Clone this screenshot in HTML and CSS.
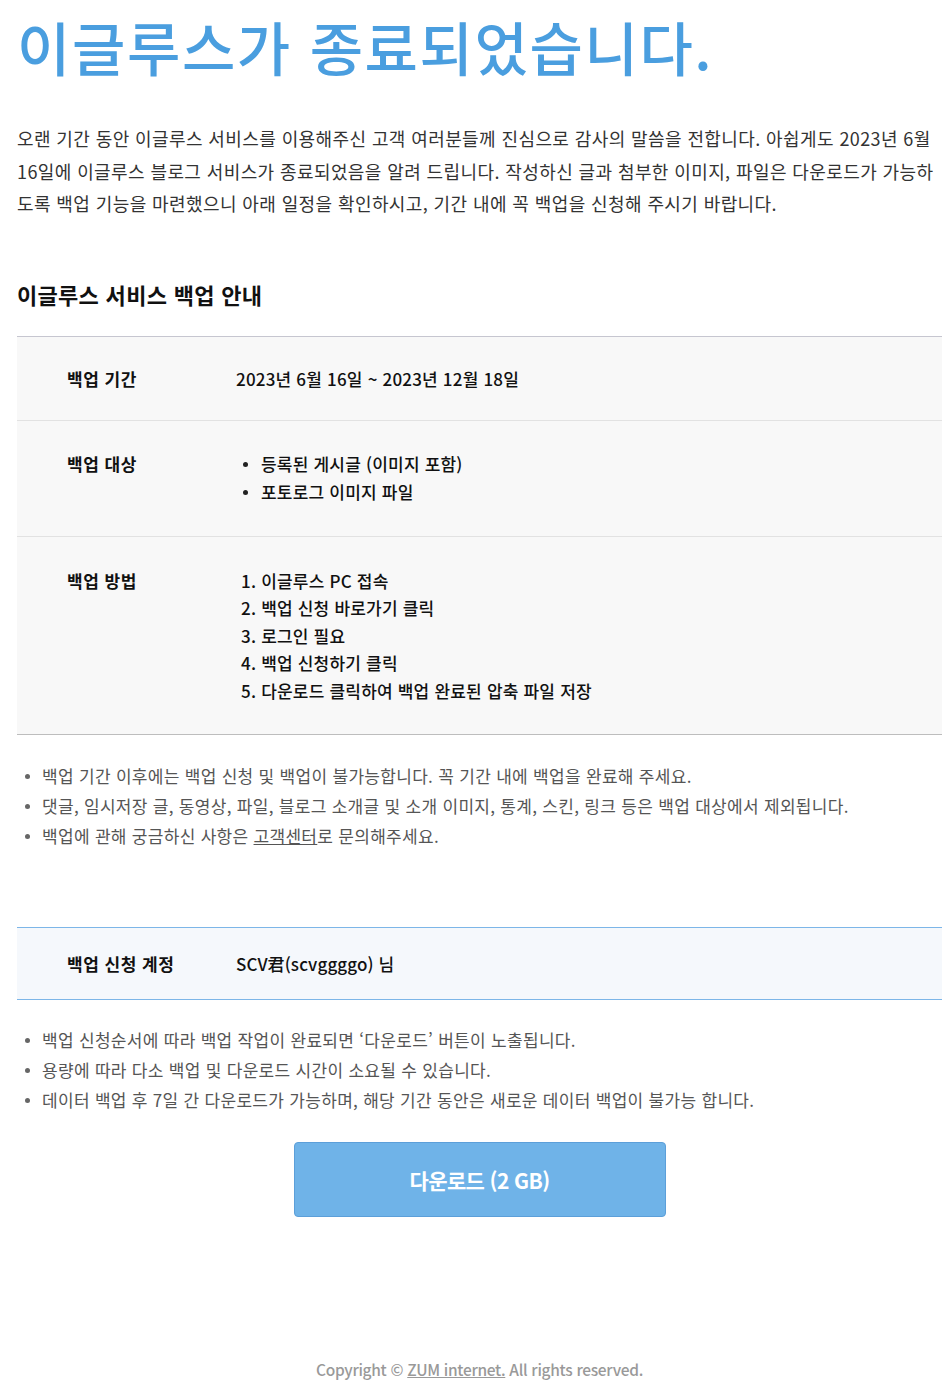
FILE: index.html
```html
<!DOCTYPE html>
<html lang="ko">
<head>
<meta charset="utf-8">
<title>이글루스가 종료되었습니다.</title>
<link rel="stylesheet" href="styles.css">
</head>
<body>
<div class="page">
  <h1 class="title">이글루스가 종료되었습니다.</h1>
  <p class="intro">오랜 기간 동안 이글루스 서비스를 이용해주신 고객 여러분들께 진심으로 감사의 말씀을 전합니다. 아쉽게도 2023년 6월 16일에 이글루스 블로그 서비스가 종료되었음을 알려 드립니다. 작성하신 글과 첨부한 이미지, 파일은 다운로드가 가능하도록 백업 기능을 마련했으니 아래 일정을 확인하시고, 기간 내에 꼭 백업을 신청해 주시기 바랍니다.</p>

  <h2 class="section-title">이글루스 서비스 백업 안내</h2>

  <div class="info-table">
    <div class="row">
      <div class="label">백업 기간</div>
      <div class="value">2023년 6월 16일 ~ 2023년 12월 18일</div>
    </div>
    <div class="row">
      <div class="label">백업 대상</div>
      <ul class="value dots">
        <li>등록된 게시글 (이미지 포함)</li>
        <li>포토로그 이미지 파일</li>
      </ul>
    </div>
    <div class="row">
      <div class="label">백업 방법</div>
      <ol class="value steps">
        <li>1. 이글루스 PC 접속</li>
        <li>2. 백업 신청 바로가기 클릭</li>
        <li>3. 로그인 필요</li>
        <li>4. 백업 신청하기 클릭</li>
        <li>5. 다운로드 클릭하여 백업 완료된 압축 파일 저장</li>
      </ol>
    </div>
  </div>

  <ul class="notes">
    <li>백업 기간 이후에는 백업 신청 및 백업이 불가능합니다. 꼭 기간 내에 백업을 완료해 주세요.</li>
    <li>댓글, 임시저장 글, 동영상, 파일, 블로그 소개글 및 소개 이미지, 통계, 스킨, 링크 등은 백업 대상에서 제외됩니다.</li>
    <li>백업에 관해 궁금하신 사항은 <a href="#" class="link">고객센터</a>로 문의해주세요.</li>
  </ul>

  <div class="account">
    <div class="label">백업 신청 계정</div>
    <div class="value">SCV君(scvggggo) 님</div>
  </div>

  <ul class="notes notes-after">
    <li>백업 신청순서에 따라 백업 작업이 완료되면 ‘다운로드’ 버튼이 노출됩니다.</li>
    <li>용량에 따라 다소 백업 및 다운로드 시간이 소요될 수 있습니다.</li>
    <li>데이터 백업 후 7일 간 다운로드가 가능하며, 해당 기간 동안은 새로운 데이터 백업이 불가능 합니다.</li>
  </ul>

  <div class="btn-wrap">
    <button class="btn" type="button">다운로드 (2 GB)</button>
  </div>

  <footer class="footer">Copyright © <a href="#" class="footer-link">ZUM internet.</a> All rights reserved.</footer>
</div>
</body>
</html>
```

FILE: styles.css
```css
* { box-sizing: border-box; }
html, body { margin: 0; padding: 0; background: #fff; }
body {
  font-family: "Noto Sans CJK KR", "Noto Sans", sans-serif;
  color: #333;
}
.page {
  width: 925px;
  margin-left: 17px;
}
.title {
  margin: 0;
  padding-top: 8px;
  font-size: 58px;
  line-height: 76px;
  font-weight: 500;
  color: #4a9edf;
  letter-spacing: 1.6px;
}
.intro {
  margin: 38px 0 0;
  font-size: 18px;
  line-height: 32.5px;
  letter-spacing: 0.4px;
  color: #333;
}
.section-title {
  margin: 58px 0 0;
  font-size: 22px;
  line-height: 32px;
  font-weight: 700;
  color: #111;
  letter-spacing: 0.3px;
}
.info-table {
  margin-top: 26px;
  border-top: 1px solid #c6c6d0;
  border-bottom: 1px solid #bdbdbd;
  background: #f8f8f8;
}
.row {
  display: flex;
  padding: 28px 0 27px 50px;
  border-top: 1px solid #e2e2e2;
  font-size: 17px;
  line-height: 28px;
  color: #111;
  letter-spacing: 0.2px;
}
.row:first-child { border-top: none; }
.row:nth-child(2) { padding-top: 29px; padding-bottom: 30px; }
.row:nth-child(3) { padding-top: 30px; padding-bottom: 30px; }
.label {
  width: 169px;
  flex: none;
  font-weight: 700;
  color: #111;
  letter-spacing: 0.5px;
}
.value {
  margin: 0;
  padding: 0;
  font-weight: 500;
}
.dots {
  list-style: none;
}
.dots li {
  position: relative;
  padding-left: 25px;
}
.dots li::before {
  content: "";
  position: absolute;
  left: 7px;
  top: 12px;
  width: 5px;
  height: 5px;
  border-radius: 50%;
  background: #222;
}
.steps {
  list-style: none;
  padding-left: 5px;
}
.steps li { line-height: 27.5px; }
.notes {
  list-style: none;
  margin: 26px 0 0;
  padding: 0;
  font-size: 17px;
  line-height: 30px;
  color: #555;
  letter-spacing: 0.3px;
}
.notes li {
  position: relative;
  padding-left: 25px;
}
.notes li::before {
  content: "";
  position: absolute;
  left: 8px;
  top: 13px;
  width: 5px;
  height: 5px;
  border-radius: 50%;
  background: #666;
}
.link {
  color: #555;
  text-decoration: underline;
}
.account {
  display: flex;
  align-items: center;
  margin-top: 76px;
  height: 73px;
  padding-left: 50px;
  border-top: 1px solid #7db6e8;
  border-bottom: 1px solid #7db6e8;
  background: #f5f8fc;
  font-size: 17px;
  color: #111;
  letter-spacing: 0.3px;
}
.account .value { font-weight: 500; letter-spacing: 0.1px; }
.notes-after { margin-top: 25px; }
.btn-wrap {
  display: flex;
  justify-content: center;
  margin-top: 27px;
}
.btn {
  width: 372px;
  height: 75px;
  border: 1px solid #5c9fd9;
  border-radius: 4px;
  background: #6fb3e8;
  color: #fff;
  font-family: "Noto Sans CJK KR", "Noto Sans", sans-serif;
  font-size: 21px;
  font-weight: 700;
  letter-spacing: -0.6px;
  cursor: pointer;
}
.footer {
  margin-top: 140px;
  text-align: center;
  font-size: 15.5px;
  line-height: 24px;
  font-weight: 500;
  color: #999;
  letter-spacing: -0.3px;
}
.footer-link {
  color: #999;
  text-decoration: underline;
}
```
